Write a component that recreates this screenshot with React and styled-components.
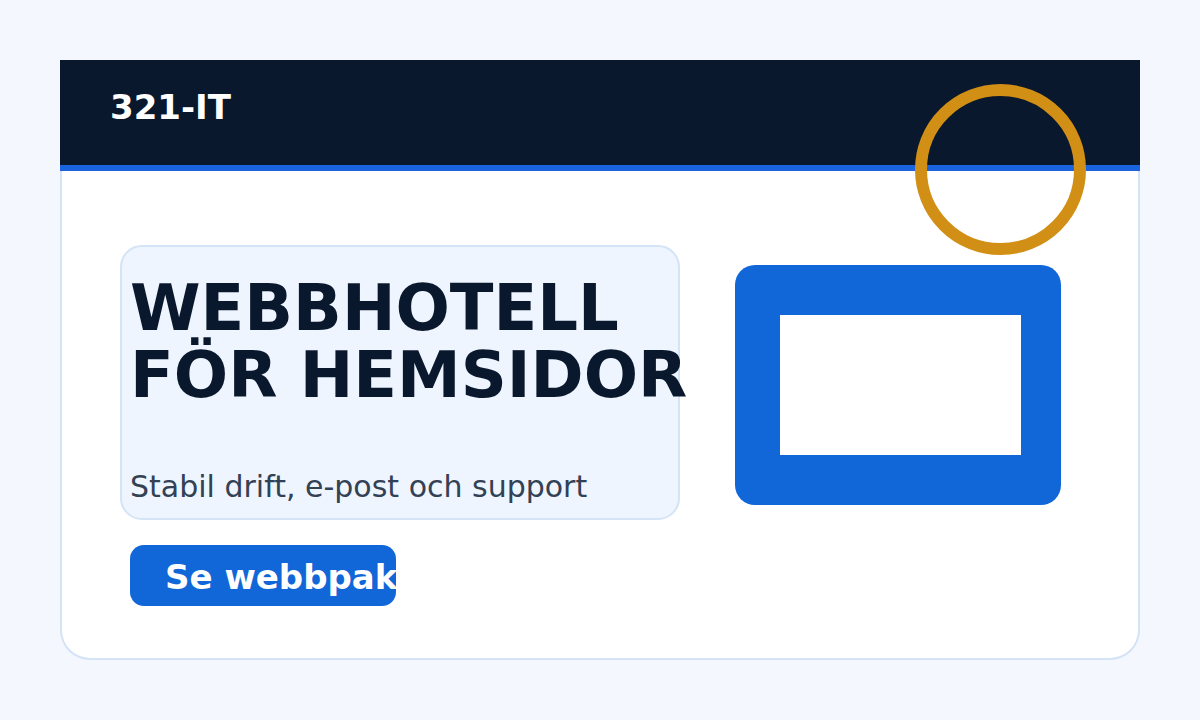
import React from 'react';
import styled, { createGlobalStyle } from 'styled-components';

const GlobalStyle = createGlobalStyle`
  html, body {
    margin: 0;
    padding: 0;
    background: #f4f7fe;
    font-family: "DejaVu Sans", "Noto Sans", sans-serif;
  }
`;

const Page = styled.div`
  width: 1200px;
  height: 720px;
  padding: 60px;
  box-sizing: border-box;
`;

const Card = styled.div`
  position: relative;
  width: 1080px;
  height: 600px;
  box-sizing: border-box;
  background: #ffffff;
  border: 2px solid #d4e3f5;
  border-top: none;
  border-radius: 0 0 30px 30px;
  display: flex;
  flex-direction: column;
`;

const Header = styled.header`
  height: 111px;
  margin: 0 -2px;
  box-sizing: border-box;
  background: #0a182d;
  border-bottom: 6px solid #1b62de;
  padding: 27px 0 0 50px;
`;

const Brand = styled.div`
  color: #ffffff;
  font-size: 34px;
  font-weight: bold;
`;

/* gold ring sitting across the header edge */
const Ring = styled.div`
  position: absolute;
  left: 853px;
  top: 24px;
  width: 171px;
  height: 171px;
  box-sizing: border-box;
  border: 12px solid #d18f15;
  border-radius: 50%;
`;

const Body = styled.main`
  display: flex;
  padding: 74px 0 0 58px;
`;

const Intro = styled.div`
  display: flex;
  flex-direction: column;
  align-items: flex-start;
`;

const TextBox = styled.section`
  width: 560px;
  height: 275px;
  box-sizing: border-box;
  background: #eef5ff;
  border: 2px solid #d4e3f5;
  border-radius: 22px;
  padding: 28px 8px 14px;
  display: flex;
  flex-direction: column;
`;

const Title = styled.h1`
  margin: 0;
  color: #0a182d;
  font-size: 64px;
  line-height: 67px;
  font-weight: bold;
  white-space: nowrap;
`;

const Lead = styled.p`
  margin: auto 0 0;
  color: #334155;
  font-size: 30px;
  white-space: nowrap;
`;

const Button = styled.a`
  margin: 25px 0 0 10px;
  width: 266px;
  height: 61px;
  box-sizing: border-box;
  overflow: hidden;
  display: flex;
  align-items: center;
  padding: 2px 0 0 35px;
  background: #1166d8;
  border-radius: 14px;
  color: #ffffff;
  font-size: 34px;
  font-weight: bold;
  white-space: nowrap;
  text-decoration: none;
`;

const Monitor = styled.div`
  margin: 20px 0 0 55px;
  width: 326px;
  height: 240px;
  box-sizing: border-box;
  padding: 50px 40px 50px 45px;
  background: #1166d8;
  border-radius: 20px;
  display: flex;
`;

const Screen = styled.div`
  flex: 1;
  background: #ffffff;
`;

const App = () => (
  <Page>
    <GlobalStyle />
    <Card>
      <Header>
        <Brand>321-IT</Brand>
      </Header>
      <Ring />
      <Body>
        <Intro>
          <TextBox>
            <Title>
              WEBBHOTELL
              <br />
              FÖR HEMSIDOR
            </Title>
            <Lead>Stabil drift, e-post och support</Lead>
          </TextBox>
          <Button href="#">Se webbpaket</Button>
        </Intro>
        <Monitor>
          <Screen />
        </Monitor>
      </Body>
    </Card>
  </Page>
);

export default App;
